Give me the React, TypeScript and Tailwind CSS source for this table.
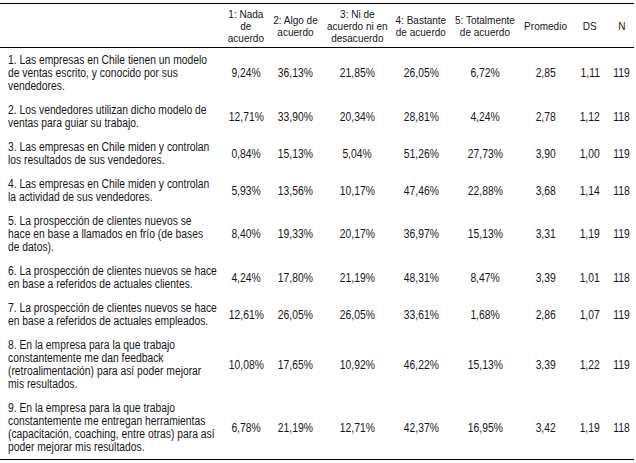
import React from 'react';

interface Row {
  lines: string[];
  values: string[];
}

const HEADERS: string[][] = [
  ['1: Nada', 'de', 'acuerdo'],
  ['2: Algo de', 'acuerdo'],
  ['3: Ni de', 'acuerdo ni en', 'desacuerdo'],
  ['4: Bastante', 'de acuerdo'],
  ['5: Totalmente', 'de acuerdo'],
  ['Promedio'],
  ['DS'],
  ['N'],
];

const ROWS: Row[] = [
  {
    lines: ['1. Las empresas en Chile tienen un modelo', 'de ventas escrito, y conocido por sus', 'vendedores.'],
    values: ['9,24%', '36,13%', '21,85%', '26,05%', '6,72%', '2,85', '1,11', '119'],
  },
  {
    lines: ['2. Los vendedores utilizan dicho modelo de', 'ventas para guiar su trabajo.'],
    values: ['12,71%', '33,90%', '20,34%', '28,81%', '4,24%', '2,78', '1,12', '118'],
  },
  {
    lines: ['3. Las empresas en Chile miden y controlan', 'los resultados de sus vendedores.'],
    values: ['0,84%', '15,13%', '5,04%', '51,26%', '27,73%', '3,90', '1,00', '119'],
  },
  {
    lines: ['4. Las empresas en Chile miden y controlan', 'la actividad de sus vendedores.'],
    values: ['5,93%', '13,56%', '10,17%', '47,46%', '22,88%', '3,68', '1,14', '118'],
  },
  {
    lines: ['5. La prospección de clientes nuevos se', 'hace en base a llamados en frío (de bases', 'de datos).'],
    values: ['8,40%', '19,33%', '20,17%', '36,97%', '15,13%', '3,31', '1,19', '119'],
  },
  {
    lines: ['6. La prospección de clientes nuevos se hace', 'en base a referidos de actuales clientes.'],
    values: ['4,24%', '17,80%', '21,19%', '48,31%', '8,47%', '3,39', '1,01', '118'],
  },
  {
    lines: ['7. La prospección de clientes nuevos se hace', 'en base a referidos de actuales empleados.'],
    values: ['12,61%', '26,05%', '26,05%', '33,61%', '1,68%', '2,86', '1,07', '119'],
  },
  {
    lines: ['8. En la empresa para la que trabajo', 'constantemente me dan feedback', '(retroalimentación) para así poder mejorar', 'mis resultados.'],
    values: ['10,08%', '17,65%', '10,92%', '46,22%', '15,13%', '3,39', '1,22', '119'],
  },
  {
    lines: ['9. En la empresa para la que trabajo', 'constantemente me entregan herramientas', '(capacitación, coaching, entre otras) para así', 'poder mejorar mis resultados.'],
    values: ['6,78%', '21,19%', '12,71%', '42,37%', '16,95%', '3,42', '1,19', '118'],
  },
];

const GRID = 'grid grid-cols-[222px_48px_50px_74px_54px_74px_48px_40px_24px]';

// the source uses a narrow face; Liberation Sans squeezed horizontally stands in for it
export default function App() {
  return (
    <div
      className="w-[636px] h-[463px] bg-white text-[#161616] text-[12px] leading-[13px] pt-[3px]"
      style={{ fontFamily: '"Liberation Sans", Arial, sans-serif' }}
    >
      <div className="w-[634px] border-t border-b border-black">
        {/* Header */}
        <div className={`${GRID} h-[44px] border-b border-black`}>
          <div />
          {HEADERS.map((h, i) => (
            <div key={i} className="flex items-center justify-center">
              <div className="flex flex-col items-center text-center text-[11px] leading-[12px] whitespace-nowrap scale-x-[0.91] origin-center">
                {h.map(l => (
                  <span key={l}>{l}</span>
                ))}
              </div>
            </div>
          ))}
        </div>

        {/* Body */}
        {ROWS.map((row, i) => (
          <div key={i} className={`${GRID} pt-[6px] pb-[5px]`}>
            <div className="pl-[8px]">
              <div className="flex flex-col whitespace-nowrap scale-x-[0.86] origin-left">
                {row.lines.map(l => (
                  <span key={l}>{l}</span>
                ))}
              </div>
            </div>
            {row.values.map((v, j) => (
              <div key={j} className="flex items-center justify-center">
                <span className="whitespace-nowrap scale-x-[0.86] origin-center">{v}</span>
              </div>
            ))}
          </div>
        ))}
      </div>
    </div>
  );
}
